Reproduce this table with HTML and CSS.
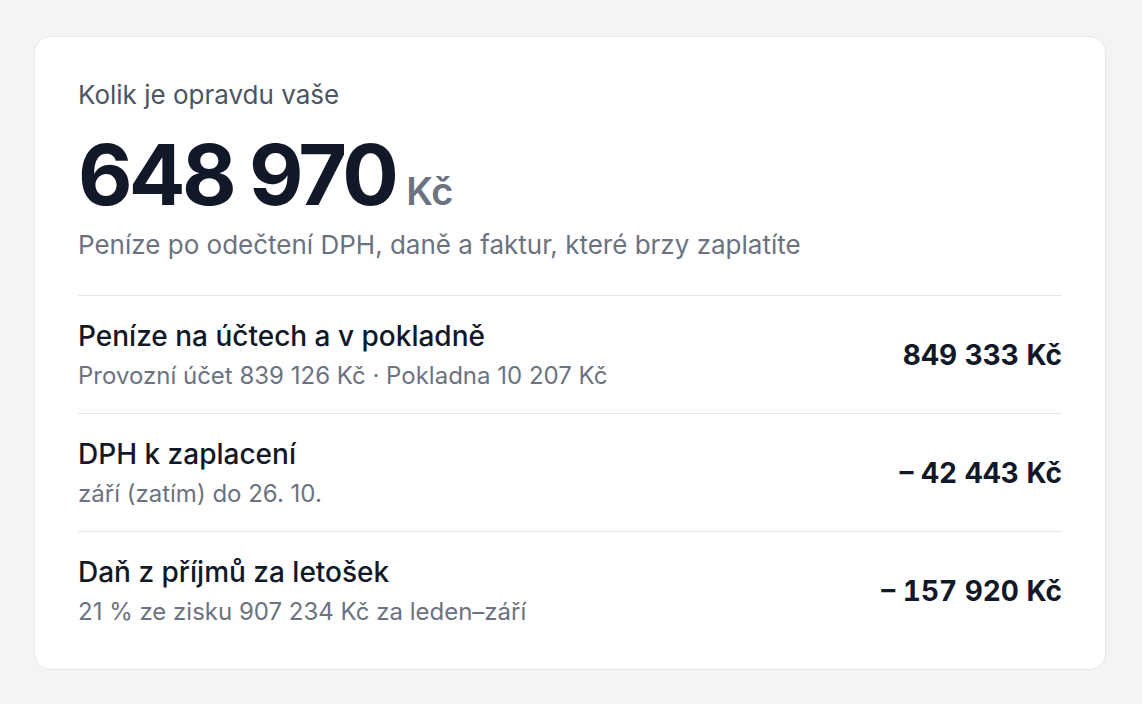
FILE: index.html
```html
<!DOCTYPE html>
<html lang="cs">
<head>
    <meta charset="UTF-8">
    <meta name="viewport" content="width=device-width, initial-scale=1.0">
    <title>Kolik je opravdu vaše</title>
    <link rel="stylesheet" href="styles.css">
</head>
<body>

    <div class="card">
        <div class="summary">
            <p class="label">Kolik je opravdu vaše</p>
            <p class="total">648 970<span class="currency">Kč</span></p>
            <p class="note">Peníze po odečtení DPH, daně a faktur, které brzy zaplatíte</p>
        </div>

        <div class="row">
            <div class="row-text">
                <p class="row-title">Peníze na účtech a v pokladně</p>
                <p class="row-sub">Provozní účet 839 126 Kč · Pokladna 10 207 Kč</p>
            </div>
            <div class="row-value">849 333 Kč</div>
        </div>

        <div class="row">
            <div class="row-text">
                <p class="row-title">DPH k zaplacení</p>
                <p class="row-sub">září (zatím) do 26. 10.</p>
            </div>
            <div class="row-value">– 42 443 Kč</div>
        </div>

        <div class="row">
            <div class="row-text">
                <p class="row-title">Daň z příjmů za letošek</p>
                <p class="row-sub">21 % ze zisku 907 234 Kč za leden–září</p>
            </div>
            <div class="row-value">– 157 920 Kč</div>
        </div>
    </div>

</body>
</html>
```

FILE: styles.css
```css
body {
    font-family: Inter, "Noto Sans", sans-serif;
    background-color: #f3f4f6;
    color: #111827;
    margin: 0;
    padding: 36px 36px 34px 34px;
}
p {
    margin: 0;
}
.card {
    background-color: #fff;
    border: 1px solid #e5e7eb;
    border-radius: 16px;
    padding: 43px 43px 42px 43px;
}
.summary {
    padding-bottom: 35px;
    border-bottom: 1px solid #e5e7eb;
}
.label {
    font-size: 26px;
    line-height: 30px;
    color: #4b5563;
}
.total {
    font-size: 84px;
    font-weight: 700;
    letter-spacing: -3.7px;
    line-height: 100px;
    margin-top: 15px;
    color: #111827;
}
.currency {
    font-size: 38px;
    font-weight: 600;
    line-height: 1;
    letter-spacing: 0;
    margin-left: 11px;
    color: #6b7280;
}
.note {
    font-size: 26px;
    line-height: 30px;
    color: #6b7280;
    margin-top: 5px;
}
.row {
    display: flex;
    align-items: center;
    justify-content: space-between;
    padding: 23px 0 22px;
    border-bottom: 1px solid #e5e7eb;
}
.row:last-child {
    border-bottom: none;
    padding-bottom: 0;
}
.row-title {
    font-size: 28px;
    line-height: 34px;
    font-weight: 500;
    color: #111827;
}
.row-sub {
    font-size: 24px;
    line-height: 30px;
    color: #6b7280;
    margin-top: 8px;
}
.row-value {
    font-size: 28px;
    font-weight: 700;
    font-variant-numeric: tabular-nums;
    color: #111827;
}
```
